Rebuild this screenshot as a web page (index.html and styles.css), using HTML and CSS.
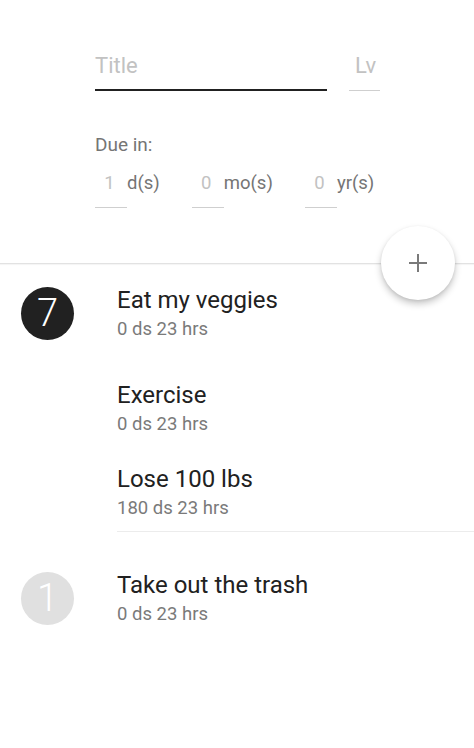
FILE: index.html
```html
<!DOCTYPE html>
<html lang="en">
<head>
    <meta charset="UTF-8">
    <meta name="viewport" content="width=device-width, initial-scale=1.0">
    <title>Tasks</title>
    <link rel="stylesheet" href="styles.css">
</head>
<body>
    <!-- New task form -->
    <div class="header">
        <div class="title-row">
            <div class="field title-field">Title</div>
            <div class="field level-field">Lv</div>
        </div>

        <div class="due-label">Due in:</div>
        <div class="due-row">
            <div class="field num-field">1</div>
            <span class="unit">d(s)</span>
            <div class="field num-field">0</div>
            <span class="unit">mo(s)</span>
            <div class="field num-field">0</div>
            <span class="unit">yr(s)</span>
        </div>

        <button class="fab" aria-label="Add task">
            <svg width="20" height="20" viewBox="0 0 20 20">
                <path d="M10 1v18M1 10h18" stroke="#7a7a7a" stroke-width="2" fill="none"/>
            </svg>
        </button>
    </div>

    <!-- Task list, grouped by level -->
    <div class="task-list">
        <div class="group">
            <div class="avatar dark">7</div>
            <div class="tasks">
                <div class="task">
                    <div class="task-title">Eat my veggies</div>
                    <div class="task-meta">0 ds 23 hrs</div>
                </div>
                <div class="task">
                    <div class="task-title">Exercise</div>
                    <div class="task-meta">0 ds 23 hrs</div>
                </div>
                <div class="task">
                    <div class="task-title">Lose 100 lbs</div>
                    <div class="task-meta">180 ds 23 hrs</div>
                </div>
            </div>
        </div>

        <div class="group">
            <div class="avatar light">1</div>
            <div class="tasks">
                <div class="task">
                    <div class="task-title">Take out the trash</div>
                    <div class="task-meta">0 ds 23 hrs</div>
                </div>
            </div>
        </div>
    </div>
</body>
</html>
```

FILE: styles.css
```css
/* Base styles */
body {
    margin: 0;
    font-family: Roboto, "Liberation Sans", sans-serif;
    color: #212121;
    background: #fff;
}

/* Header form */
.header {
    position: relative;
    height: 264px;
    padding-left: 95px;
    border-bottom: 1px solid #e2e2e2;
    box-shadow: 0 1px 1px rgba(0, 0, 0, 0.04);
    box-sizing: border-box;
}

.title-row {
    display: flex;
    align-items: flex-end;
    padding-top: 52px;
}

.field {
    color: #c2c2c2;
    box-sizing: border-box;
}

.title-field {
    width: 232px;
    font-size: 22px;
    line-height: 28px;
    padding-bottom: 9px;
    border-bottom: 2px solid #212121;
}

.level-field {
    width: 31px;
    margin-left: 22px;
    padding-left: 6px;
    font-size: 22px;
    line-height: 28px;
    padding-bottom: 10px;
    border-bottom: 1px solid #cfcfcf;
}

.due-label {
    margin-top: 42px;
    font-size: 19px;
    line-height: 24px;
    color: #757575;
}

.due-row {
    display: flex;
    align-items: flex-end;
    margin-top: 14px;
}

.num-field {
    width: 32px;
    padding-right: 3px;
    text-align: center;
    font-size: 18.5px;
    line-height: 24px;
    padding-bottom: 12px;
    border-bottom: 1px solid #cfcfcf;
}

.unit {
    margin-right: 32px;
    padding-bottom: 13px;
    font-size: 18.5px;
    line-height: 24px;
    color: #757575;
}

/* Floating add button */
.fab {
    position: absolute;
    right: 19px;
    bottom: -37px;
    width: 74px;
    height: 74px;
    padding: 0;
    border: none;
    border-radius: 50%;
    background: #fff;
    box-shadow: 0 4px 7px rgba(0, 0, 0, 0.22), 0 1px 3px rgba(0, 0, 0, 0.08);
    display: flex;
    align-items: center;
    justify-content: center;
    cursor: pointer;
}

/* Task list */
.group {
    display: flex;
    padding-top: 6px;
}

.group + .group {
    padding-top: 23px;
}

.avatar {
    flex: none;
    width: 53px;
    height: 53px;
    margin: 17px 43px 0 21px;
    border-radius: 50%;
    color: #fff;
    font-size: 38px;
    font-weight: 300;
    line-height: 53px;
    text-align: center;
}

.avatar.dark {
    background: #212121;
}

.avatar.light {
    background: #e0e0e0;
}

.tasks {
    flex: 1;
    border-bottom: 1px solid #ececec;
}

.group:last-child .tasks {
    border-bottom: none;
}

.task {
    padding: 15px 0;
}

.task:first-child {
    padding: 16px 0 26px;
}

.task:last-child {
    padding-bottom: 12px;
}

.task-title {
    font-size: 24px;
    line-height: 28px;
}

.task-meta {
    margin-top: 4px;
    font-size: 18.5px;
    line-height: 22px;
    color: #7a7a7a;
}
```
